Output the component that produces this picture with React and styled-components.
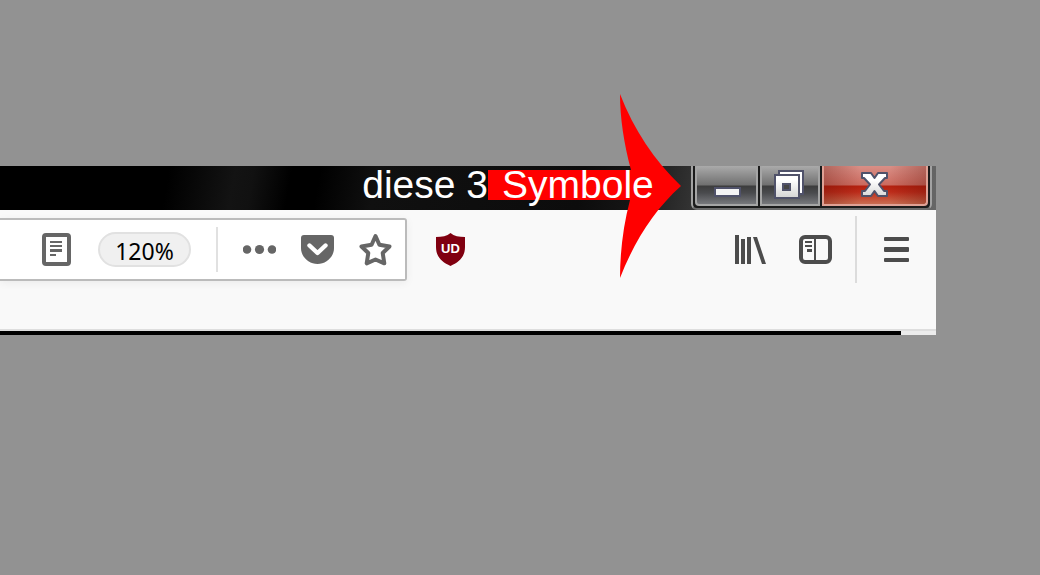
import React from 'react';
import styled, { createGlobalStyle } from 'styled-components';

const GlobalStyle = createGlobalStyle`
  * {
    box-sizing: border-box;
  }

  body {
    margin: 0;
    background-color: #929292;
    font-family: 'Liberation Sans', Arial, sans-serif;
  }

  button {
    margin: 0;
    padding: 0;
    border: none;
    background: none;
    font: inherit;
  }

  svg {
    display: block;
  }
`;

const Page = styled.main`
  padding-top: 166px;
`;

const BrowserWindow = styled.section`
  width: 90%;
  background-color: #f9f9f9;
`;

const TitleBar = styled.header`
  display: flex;
  justify-content: flex-end;
  height: 44px;
  background: linear-gradient(
    100deg,
    #000 0%,
    #000 18%,
    #131313 25%,
    #111 27%,
    #000 31%,
    #000 34%,
    #101010 40%,
    #0c0c0c 62%,
    #141414 67%,
    #333 74%,
    #666 100%
  );
`;

const Note = styled.p`
  display: flex;
  margin: 0 10px 0 0;
  color: #fff;
  font-size: 39px;
  line-height: 38px;
  white-space: pre;
`;

const ArrowLabel = styled.span`
  position: relative;
  width: 193px;
  padding-left: 14px;
`;

const ArrowShape = styled.svg`
  position: absolute;
  left: 0;
  top: -72px;
  z-index: 1;
`;

const ArrowText = styled.span`
  position: relative;
  z-index: 2;
`;

const WindowControls = styled.div`
  display: flex;
  gap: 2px;
  margin-right: 4px;
  padding: 0 2px 2px;
  border: 2px solid #a2a2a2;
  border-top: none;
  border-bottom-color: #6c6c6c;
  border-radius: 0 0 6px 6px;
  background-color: #1b1b1b;
`;

const ControlButton = styled.button`
  display: flex;
  justify-content: center;
  width: ${({ $width }) => $width}px;
  border: 2px solid ${({ $close }) => ($close ? '#dfa195' : '#a5a5a5')};
  border-top: none;
  border-radius: ${({ $radius }) => $radius || '0'};
  background: ${({ $close }) =>
    $close
      ? 'linear-gradient(90deg, rgba(90, 10, 0, 0.3), transparent 35%, transparent 65%, rgba(90, 10, 0, 0.3)), linear-gradient(#d98f86 0, #cb6a5f 19px, #b4200f 20px, #bd2c1a 26px, #c96d51 38px)'
      : 'linear-gradient(#aaa 0, #707070 19px, #3c3c3c 20px, #4a4b4e 27px, #77787c 38px)'};
`;

const NavigationBar = styled.div`
  display: flex;
  align-items: center;
  height: 79px;
  padding-right: 23px;
`;

const AddressBar = styled.div`
  display: flex;
  flex: 1;
  align-items: center;
  gap: 25px;
  min-width: 0;
  height: 63px;
  padding-right: 13px;
  border: 2px solid #bbb;
  border-left: none;
  border-radius: 0 3px 3px 0;
  background-color: #fff;
  box-shadow: 0 2px 8px rgba(0, 0, 0, 0.06);
`;

const AddressInput = styled.input`
  flex: 1;
  width: 0;
  min-width: 0;
  margin-right: -25px;
  padding: 0;
  border: none;
  outline: none;
  background: none;
`;

const ZoomButton = styled.button`
  flex: none;
  width: 93px;
  height: 35px;
  padding-top: 1px;
  border: 2px solid #e1e1e1;
  border-radius: 18px;
  background-color: #f0f0f0;
  color: #000;
  font-family: 'Noto Sans', sans-serif;
  font-size: 23px;
  line-height: 32px;
`;

const Divider = styled.span`
  flex: none;
  width: 2px;
  height: ${({ $tall }) => ($tall ? 67 : 45)}px;
  background-color: ${({ $tall }) => ($tall ? '#dcdcdc' : '#e1e1e1')};
`;

const IconButton = styled.button`
  flex: none;
  color: ${({ $dark }) => ($dark ? '#4c4c4c' : '#666')};
`;

const Extensions = styled.div`
  display: flex;
  flex: none;
  width: 327px;
  padding-left: 27px;
`;

const Tools = styled.div`
  display: flex;
  flex: none;
  gap: 32px;
`;

const MenuArea = styled.div`
  display: flex;
  flex: none;
  align-items: center;
  gap: 23px;
  margin-left: 23px;
`;

const BookmarksBar = styled.div`
  height: 42px;
  border-bottom: 2px solid #dedede;
`;

const Content = styled.div`
  height: 4px;
  margin-right: 35px;
  background-color: #000;
`;

const ContentRow = styled.div`
  background-color: #ececec;
`;

function Icon({ children, ...props }) {
  return (
    <svg width='33' height='33' viewBox='0 0 33 33' fill='none' aria-hidden='true' {...props}>
      {children}
    </svg>
  );
}

function ControlIcon({ children }) {
  return (
    <svg width='32' height='36' viewBox='0 0 32 36' aria-hidden='true'>
      <defs>
        <linearGradient id='metal' x1='0' y1='6' x2='0' y2='32' gradientUnits='userSpaceOnUse'>
          <stop offset='0.3' stopColor='#fff' />
          <stop offset='1' stopColor='#d4d4d4' />
        </linearGradient>
      </defs>
      {children}
    </svg>
  );
}

function Titlebar() {
  return (
    <TitleBar>
      <Note>
        <span>diese 3</span>
        <ArrowLabel>
          <ArrowShape width='193' height='184' viewBox='0 0 193 184' aria-hidden='true'>
            <path
              d='M0 76H143C136 50 132 24 132 0C146 36 166 66 193 92C166 116 146 148 132 184C132 160 135 132 142 106H0Z'
              fill='#f00'
            />
          </ArrowShape>
          <ArrowText>Symbole</ArrowText>
        </ArrowLabel>
      </Note>
      <WindowControls>
        <ControlButton type='button' aria-label='Minimieren' $width={63} $radius='0 0 0 4px'>
          <ControlIcon>
            <rect x='4' y='22' width='25' height='8' fill='#f4f4f4' stroke='#50526a' strokeWidth='2' />
          </ControlIcon>
        </ControlButton>
        <ControlButton type='button' aria-label='Verkleinern' $width={60}>
          <ControlIcon>
            <path d='M5 5H29V28H5Z' fill='#fff' stroke='#50526a' strokeWidth='2' />
            <path d='M1 9H25V32H1Z' fill='url(#metal)' stroke='#50526a' strokeWidth='2' />
            <path d='M9 18H16V24H9Z' fill='#454545' stroke='#50526a' strokeWidth='2' />
          </ControlIcon>
        </ControlButton>
        <ControlButton type='button' aria-label='Schließen' $width={106} $radius='0 0 4px 0' $close>
          <ControlIcon>
            <path
              d='M3 7H12L15.500 12L19 7H28V12H26L20 18.500L25 25H28V30H19L15.500 25L12 30H3V25H6L11 18.500L5 12H3Z'
              fill='url(#metal)'
              stroke='#50526a'
              strokeWidth='2'
              strokeLinejoin='round'
            />
          </ControlIcon>
        </ControlButton>
      </WindowControls>
    </TitleBar>
  );
}

function Address() {
  return (
    <AddressBar>
      <AddressInput type='text' aria-label='Adresse' />
      <IconButton type='button' aria-label='Leseansicht'>
        <Icon>
          <rect x='4' y='2' width='25' height='29' rx='2' stroke='currentColor' strokeWidth='4' />
          <path
            d='M10 8h12v2H10zM10 12h12v2H10zM10 16h12v3H10zM10 21h6v2h-6z'
            fill='currentColor'
          />
        </Icon>
      </IconButton>
      <ZoomButton type='button'>120%</ZoomButton>
      <Divider />
      <IconButton type='button' aria-label='Seitenaktionen'>
        <Icon fill='currentColor'>
          <circle cx='4' cy='16.5' r='4.3' />
          <circle cx='16.5' cy='16.5' r='4.6' />
          <circle cx='29' cy='16.5' r='4.3' />
        </Icon>
      </IconButton>
      <IconButton type='button' aria-label='Pocket'>
        <Icon>
          <path
            d='M3 2H30Q33 2 33 5V15C33 24 25 31 16.5 31S0 24 0 15V5Q0 2 3 2Z'
            fill='currentColor'
          />
          <path
            d='M8.5 12.5L16.5 20L24.5 12.5'
            stroke='#fff'
            strokeWidth='4.4'
            strokeLinecap='round'
            strokeLinejoin='round'
          />
        </Icon>
      </IconButton>
      <IconButton type='button' aria-label='Lesezeichen'>
        <Icon>
          <path
            d='M16.5 3L20.4 11.7L30.5 13.5L23.7 20L25.3 30.3L16.5 26.5L7.7 30.3L9.3 20L2.5 13.5L12.6 11.7Z'
            stroke='currentColor'
            strokeWidth='4'
            strokeLinejoin='round'
          />
        </Icon>
      </IconButton>
    </AddressBar>
  );
}

export default function App() {
  return (
    <>
      <GlobalStyle />
      <Page>
        <BrowserWindow>
          <Titlebar />
          <NavigationBar>
            <Address />
            <Extensions>
              <IconButton type='button' aria-label='Werbeblocker'>
                <Icon>
                  <path
                    d='M16.5 0C20 3 25 4 31 4V14C31 24 25 29 16.5 33C8 29 2 24 2 14V4C8 4 13 3 16.5 0Z'
                    fill='#800010'
                  />
                  <text
                    x='16.5'
                    y='20'
                    textAnchor='middle'
                    fill='#fff'
                    fontFamily='Liberation Sans, sans-serif'
                    fontSize='13'
                    fontWeight='700'
                  >
                    UD
                  </text>
                </Icon>
              </IconButton>
            </Extensions>
            <Tools>
              <IconButton type='button' aria-label='Bibliothek' $dark>
                <Icon fill='currentColor'>
                  <path d='M1 2h4v29H1zM7 6h4v25H7zM13 4h4v27h-4zM19 4h4L32 31H28z' />
                </Icon>
              </IconButton>
              <IconButton type='button' aria-label='Seitenleiste' $dark>
                <Icon>
                  <rect
                    x='2'
                    y='4'
                    width='29'
                    height='25'
                    rx='4'
                    stroke='currentColor'
                    strokeWidth='4'
                  />
                  <path
                    d='M15 4h2v25h-2zM6 8h7v2H6zM6 12h7v2H6zM8 16h5v3H8z'
                    fill='currentColor'
                  />
                </Icon>
              </IconButton>
            </Tools>
            <MenuArea>
              <Divider $tall />
              <IconButton type='button' aria-label='Menü' $dark>
                <Icon fill='currentColor'>
                  <rect x='4' y='4' width='25' height='4' rx='1' />
                  <rect x='4' y='14' width='25' height='5' rx='1' />
                  <rect x='4' y='25' width='25' height='4' rx='1' />
                </Icon>
              </IconButton>
            </MenuArea>
          </NavigationBar>
          <BookmarksBar />
          <ContentRow>
            <Content />
          </ContentRow>
        </BrowserWindow>
      </Page>
    </>
  );
}
